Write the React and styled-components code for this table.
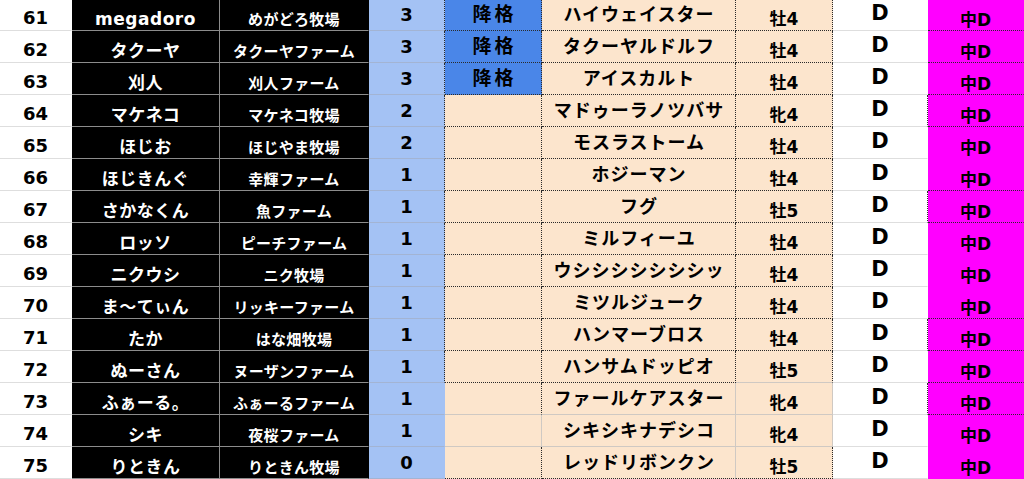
import React from "react";
import styled, { createGlobalStyle } from "styled-components";

const GlobalStyle = createGlobalStyle`
  html, body {
    margin: 0;
    padding: 0;
    background: #ffffff;
    overflow: hidden;
  }
`;

// border kinds used by the sheet
const LINE = {
  none: "1px solid transparent",
  light: "1px solid #dedede",
  dark: "1px solid #8c8c8c",
  blue: "1px solid #a3b4d3",
  soft: "1px solid #cfc9c3",
  dot: "1px dotted #2a2a2a",
};

const rows = [
  { no: 61, owner: "megadoro", farm: "めがどろ牧場", rank: 3, demote: true, horse: "ハイウェイスター", sex: "牡4" },
  { no: 62, owner: "タクーヤ", farm: "タクーヤファーム", rank: 3, demote: true, horse: "タクーヤルドルフ", sex: "牡4" },
  { no: 63, owner: "刈人", farm: "刈人ファーム", rank: 3, demote: true, horse: "アイスカルト", sex: "牡4" },
  { no: 64, owner: "マケネコ", farm: "マケネコ牧場", rank: 2, horse: "マドゥーラノツバサ", sex: "牝4" },
  { no: 65, owner: "ほじお", farm: "ほじやま牧場", rank: 2, horse: "モスラストーム", sex: "牡4" },
  { no: 66, owner: "ほじきんぐ", farm: "幸輝ファーム", rank: 1, horse: "ホジーマン", sex: "牡4" },
  { no: 67, owner: "さかなくん", farm: "魚ファーム", rank: 1, horse: "フグ", sex: "牡5" },
  { no: 68, owner: "ロッソ", farm: "ピーチファーム", rank: 1, horse: "ミルフィーユ", sex: "牡4" },
  { no: 69, owner: "ニクウシ", farm: "ニク牧場", rank: 1, horse: "ウシシシシシシシッ", sex: "牡4" },
  { no: 70, owner: "ま〜てぃん", farm: "リッキーファーム", rank: 1, horse: "ミツルジューク", sex: "牡4" },
  { no: 71, owner: "たか", farm: "はな畑牧場", rank: 1, horse: "ハンマーブロス", sex: "牡4" },
  { no: 72, owner: "ぬーさん", farm: "ヌーザンファーム", rank: 1, horse: "ハンサムドッピオ", sex: "牡5" },
  { no: 73, owner: "ふぁーる。", farm: "ふぁーるファーム", rank: 1, horse: "ファールケアスター", sex: "牝4" },
  { no: 74, owner: "シキ", farm: "夜桜ファーム", rank: 1, horse: "シキシキナデシコ", sex: "牝4" },
  { no: 75, owner: "りときん", farm: "りときん牧場", rank: 0, horse: "レッドリボンクン", sex: "牡5" },
];

// default bottom / right lines per column
const defaults = {
  no: { b: "light", r: "none" },
  owner: { b: "dark", r: "dark" },
  farm: { b: "dark", r: "none" },
  rank: { b: "blue", r: "dot" },
  demote: { b: "dot", r: "dot" },
  horse: { b: "dot", r: "dot" },
  sex: { b: "dot", r: "dot" },
  grade: { b: "light", r: "none" },
  cls: { b: "none", r: "none" },
};

// hand-drawn exceptions from the sheet
const overrides = {
  "72-sex": { b: "soft" },
  "73-rank": { r: "none" },
  "74-rank": { r: "none" },
  "75-rank": { r: "none" },
  "73-demote": { b: "soft" },
  "74-demote": { b: "soft", r: "soft" },
  "73-horse": { b: "soft", r: "soft" },
  "74-horse": { b: "soft", r: "soft" },
  "75-horse": { r: "soft" },
  "73-sex": { b: "soft", r: "soft" },
  "74-sex": { b: "soft", r: "soft" },
};

const dottedClass = [61, 62, 63, 64, 66, 67, 70, 71, 72, 73];
const boxedClass = [64, 67, 71, 73];

const lines = (no, col) => {
  const base = { ...defaults[col], ...(overrides[`${no}-${col}`] || {}) };
  if (col === "cls" && dottedClass.includes(no)) base.b = "dot";
  if (col === "grade" && boxedClass.includes(no)) base.r = "dot";
  return base;
};

const Sheet = styled.div`
  display: grid;
  grid-template-columns: 72px 148px 149px 76px 97px 194px 97px 95px 96px;
  grid-auto-rows: 32px;
  margin-top: -1px;
  width: 1024px;
  font-family: "DejaVu Sans", "Noto Sans CJK JP", sans-serif;
  font-weight: 700;
  color: #000;
`;

const Cell = styled.div`
  box-sizing: border-box;
  display: flex;
  justify-content: center;
  align-items: ${(p) => (p.$mid ? "center" : "flex-end")};
  border-bottom: ${(p) => LINE[p.$b]};
  border-right: ${(p) => LINE[p.$r]};
  white-space: nowrap;
  overflow: hidden;
  line-height: 1;
`;

const NoCell = styled(Cell)`
  background: #ffffff;
  font-size: 18px;
  padding-bottom: 3px;
`;

const OwnerCell = styled(Cell)`
  background: #000000;
  color: #ffffff;
  font-size: 17px;
  letter-spacing: 0.5px;
  padding-bottom: 2px;
`;

const FarmCell = styled(Cell)`
  background: #000000;
  color: #ffffff;
  font-size: 15px;
  letter-spacing: 0.3px;
  padding-bottom: 2.5px;
`;

const RankCell = styled(Cell)`
  background: #a4c2f4;
  font-size: 18px;
`;

const DemoteCell = styled(Cell)`
  background: ${(p) => (p.$on ? "#4a86e8" : "#fce5cd")};
  font-size: 19px;
  letter-spacing: 3px;
  padding-left: 3px;
`;

const HorseCell = styled(Cell)`
  background: #fce5cd;
  font-size: 18px;
  letter-spacing: 1px;
  padding-left: 1px;
`;

const SexCell = styled(Cell)`
  background: #fce5cd;
  font-size: 17px;
  padding-bottom: 2px;
`;

const GradeCell = styled(Cell)`
  background: #ffffff;
  font-size: 21px;
  padding-bottom: 2px;
`;

const ClassCell = styled(Cell)`
  background: #ff00ff;
  font-size: 17px;
  padding-bottom: 1px;
`;

const Row = ({ r }) => {
  const l = (col) => {
    const v = lines(r.no, col);
    return { $b: v.b, $r: v.r };
  };
  return (
    <>
      <NoCell {...l("no")}>{r.no}</NoCell>
      <OwnerCell {...l("owner")}>{r.owner}</OwnerCell>
      <FarmCell {...l("farm")}>{r.farm}</FarmCell>
      <RankCell $mid {...l("rank")}>{r.rank}</RankCell>
      <DemoteCell $mid $on={r.demote} {...l("demote")}>{r.demote ? "降格" : ""}</DemoteCell>
      <HorseCell $mid {...l("horse")}>{r.horse}</HorseCell>
      <SexCell {...l("sex")}>{r.sex}</SexCell>
      <GradeCell $mid {...l("grade")}>D</GradeCell>
      <ClassCell {...l("cls")}>中D</ClassCell>
    </>
  );
};

export default function App() {
  return (
    <>
      <GlobalStyle />
      <Sheet>
        {rows.map((r) => (
          <Row key={r.no} r={r} />
        ))}
      </Sheet>
    </>
  );
}
